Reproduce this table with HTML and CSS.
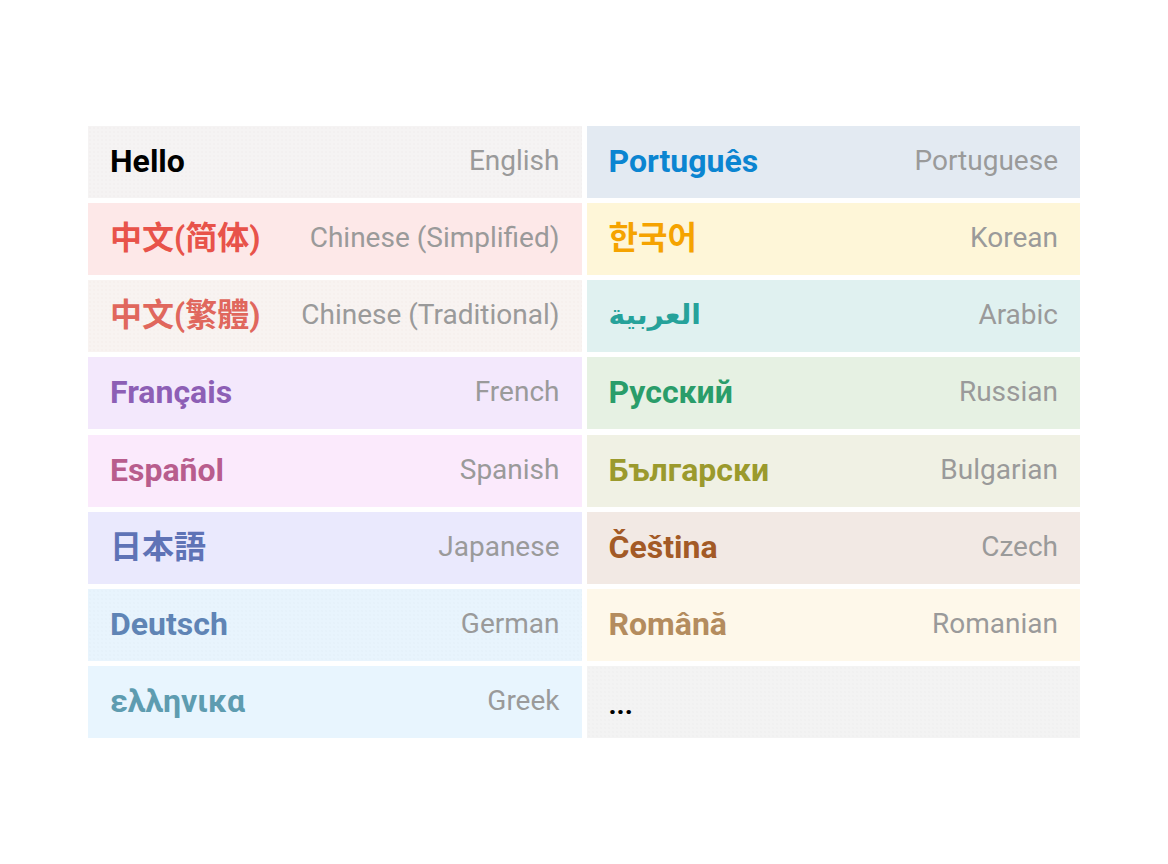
FILE: index.html
```html
<!DOCTYPE html>
<html lang="en">
<head>
<meta charset="utf-8">
<title>Languages</title>
<link rel="stylesheet" href="styles.css">
</head>
<body>
<main class="page">
  <div class="grid">
    <div class="cell c-en"><span class="native">Hello</span><span class="label">English</span></div>
    <div class="cell c-pt"><span class="native">Português</span><span class="label">Portuguese</span></div>
    <div class="cell c-zhs"><span class="native cjk-sc">中文(简体)</span><span class="label">Chinese (Simplified)</span></div>
    <div class="cell c-ko"><span class="native cjk-kr">한국어</span><span class="label">Korean</span></div>
    <div class="cell c-zht"><span class="native cjk-tc">中文(繁體)</span><span class="label">Chinese (Traditional)</span></div>
    <div class="cell c-ar"><span class="native arabic" dir="rtl">العربية</span><span class="label">Arabic</span></div>
    <div class="cell c-fr"><span class="native">Français</span><span class="label">French</span></div>
    <div class="cell c-ru"><span class="native">Русский</span><span class="label">Russian</span></div>
    <div class="cell c-es"><span class="native">Español</span><span class="label">Spanish</span></div>
    <div class="cell c-bg"><span class="native">Български</span><span class="label">Bulgarian</span></div>
    <div class="cell c-ja"><span class="native cjk-jp">日本語</span><span class="label">Japanese</span></div>
    <div class="cell c-cs"><span class="native">Čeština</span><span class="label">Czech</span></div>
    <div class="cell c-de"><span class="native">Deutsch</span><span class="label">German</span></div>
    <div class="cell c-ro"><span class="native">Română</span><span class="label">Romanian</span></div>
    <div class="cell c-el"><span class="native">ελληνικα</span><span class="label">Greek</span></div>
    <div class="cell c-more"><span class="native more">...</span></div>
  </div>
</main>
</body>
</html>
```
FILE: styles.css
```css
html, body {
  margin: 0;
  padding: 0;
  background: #ffffff;
}

.page {
  width: 1168px;
  height: 864px;
  display: flex;
  align-items: center;
  justify-content: center;
  font-family: Roboto, "Noto Sans", "DejaVu Sans", sans-serif;
}

.grid {
  display: grid;
  grid-template-columns: 493.5px 493.5px;
  grid-auto-rows: 72px;
  column-gap: 5px;
  row-gap: 5.14px;
}

.cell {
  display: flex;
  align-items: center;
  justify-content: space-between;
  padding: 0 22px 2px 22px;
}

.native {
  font-size: 32px;
  font-weight: 700;
  line-height: 1;
  white-space: nowrap;
}

.label {
  font-size: 28px;
  font-weight: 400;
  color: #9a9a9a;
  line-height: 1;
  white-space: nowrap;
}

.cjk-sc { font-family: Roboto, "Noto Sans CJK SC", sans-serif; }
.cjk-tc { font-family: Roboto, "Noto Sans CJK TC", sans-serif; }
.cjk-jp { font-family: Roboto, "Noto Sans CJK JP", sans-serif; }
.cjk-kr { font-family: Roboto, "Noto Sans CJK KR", sans-serif; }
.arabic { font-family: "DejaVu Sans", sans-serif; font-size: 28px; }

.c-en  { background-color: #f5f3f3; background-image: radial-gradient(rgba(215, 205, 205, 0.12) 0.6px, transparent 0.9px); background-size: 4px 4px; }
.c-en .native { color: #000000; }
.c-pt  { background-color: #e3eaf2; }
.c-pt .native { color: #0b85d1; }
.c-zhs { background-color: #fde8e8; }
.c-zhs .native { color: #e8534a; }
.c-ko  { background-color: #fef6d8; }
.c-ko .native { color: #f5a300; }
.c-zht { background-color: #f8f3f1; background-image: radial-gradient(rgba(220, 205, 200, 0.12) 0.6px, transparent 0.9px); background-size: 4px 4px; }
.c-zht .native { color: #e0675d; }
.c-ar  { background-color: #e0f1f0; }
.c-ar .native { color: #26a29a; }
.c-fr  { background-color: #f3e8fc; }
.c-fr .native { color: #8d5fb5; }
.c-ru  { background-color: #e6f1e3; }
.c-ru .native { color: #2a9d6a; }
.c-es  { background-color: #fbeafc; }
.c-es .native { color: #b85d8d; }
.c-bg  { background-color: #f0f1e4; }
.c-bg .native { color: #9b9a2d; }
.c-ja  { background-color: #eae9fd; }
.c-ja .native { color: #5f73b6; }
.c-cs  { background-color: #f2e9e4; }
.c-cs .native { color: #a35a26; }
.c-de  { background-color: #e8f4fd; background-image: radial-gradient(rgba(200, 212, 225, 0.12) 0.6px, transparent 0.9px); background-size: 4px 4px; }
.c-de .native { color: #5f84b5; }
.c-ro  { background-color: #fef8ea; }
.c-ro .native { color: #b48c5e; }
.c-el  { background-color: #e8f5fe; }
.c-el .native { color: #5e9cb0; }
.c-more { background-color: #f3f3f3; background-image: radial-gradient(rgba(210, 210, 210, 0.12) 0.6px, transparent 0.9px); background-size: 4px 4px; }
.c-more .native { color: #000000; font-size: 28px; padding-top: 8px; }
```
